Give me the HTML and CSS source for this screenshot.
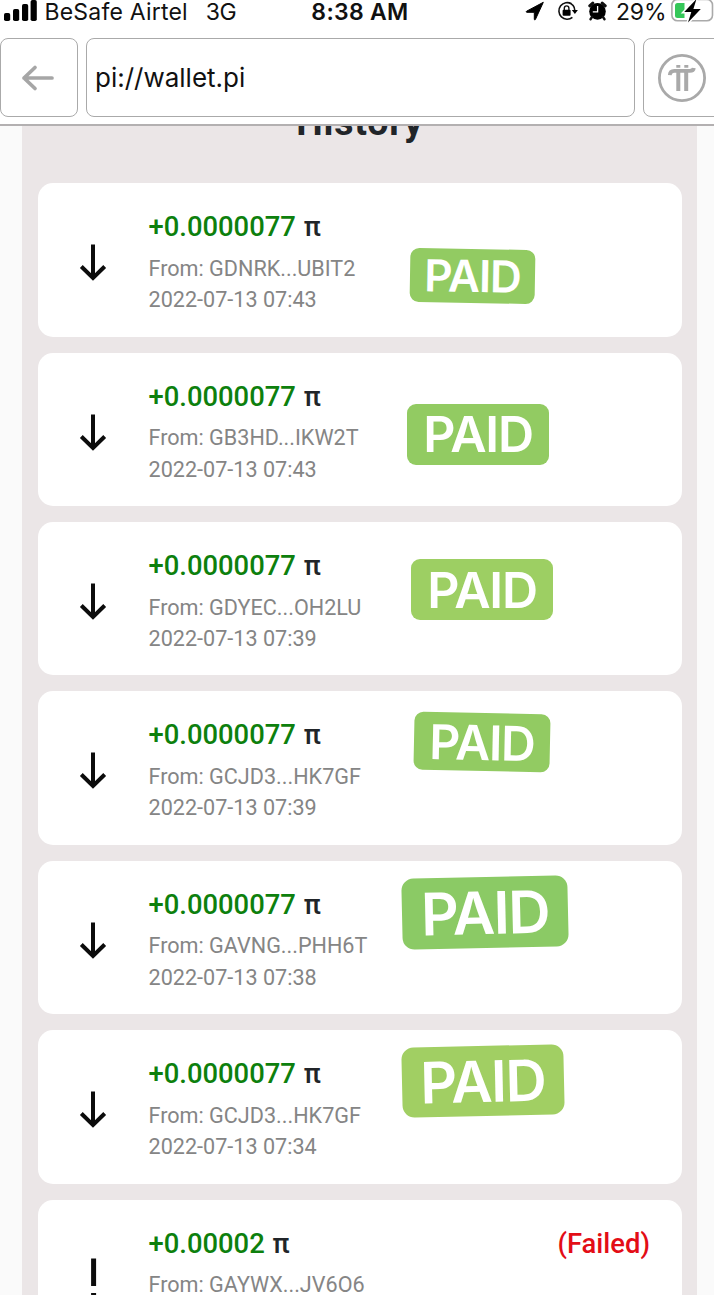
FILE: index.html
```html
<!DOCTYPE html>
<html lang="en">
<head>
    <meta charset="UTF-8" />
    <meta name="viewport" content="width=device-width, initial-scale=1" />
    <title>Pi Wallet - History</title>
    <link rel="stylesheet" href="styles.css">
</head>
<body>

    <!-- Shared icons -->
    <svg class="icon-defs" width="0" height="0">
        <symbol id="arrow-down" viewBox="0 0 28 38">
            <path d="M14 0.5V34M2.3 22.5L14 34L25.7 22.5" fill="none" stroke="#0c0c0c" stroke-width="4" />
        </symbol>
    </svg>

    <header class="top">
        <div class="status-bar">
            <div class="status-left">
                <svg class="signal" width="33" height="22" viewBox="0 0 33 22">
                    <rect x="0" y="13" width="6.2" height="8" rx="1.8" />
                    <rect x="9" y="9" width="6.2" height="12" rx="1.8" />
                    <rect x="18" y="4" width="6.2" height="17" rx="1.8" />
                    <rect x="26.6" y="0" width="6.2" height="21" rx="1.8" />
                </svg>
                <span class="carrier">BeSafe Airtel</span>
                <span class="network">3G</span>
            </div>
            <div class="time">8:38 AM</div>
            <div class="status-right">
                <svg class="location" width="18" height="20" viewBox="0 0 18 20">
                    <path d="M17.3 1.3L0.6 10.2C0 10.6 0.2 11.3 0.9 11.3H8.3V18.2C8.3 19 9.1 19.2 9.4 18.5Z" stroke="#000" />
                </svg>
                <svg class="lock" width="21" height="20" viewBox="0 0 21 20">
                    <path d="M14.5 2.8A8.3 8.3 0 1 0 15.4 16.4M11.5 1.7A8.3 8.3 0 0 1 17.8 9.5" fill="none" stroke="#111" stroke-width="1.6" />
                    <path d="M14.8 9H20.9L17.9 12.9Z" />
                    <rect x="5.6" y="8.7" width="8" height="6.1" rx="1" />
                    <path d="M7.3 9V7.2A2.3 2.3 0 0 1 11.9 7.2V9" fill="none" stroke="#111" stroke-width="1.4" />
                </svg>
                <svg class="alarm" width="19" height="20" viewBox="0 0 19 20">
                    <circle cx="9.5" cy="10.4" r="8.3" />
                    <path d="M1.7 4.8L4.8 2M17.3 4.8L14.2 2" stroke="#111" stroke-width="3" stroke-linecap="round" />
                    <path d="M4 16L2.5 18.2M15 16L16.5 18.2" stroke="#111" stroke-width="2.4" stroke-linecap="round" />
                    <path d="M9.6 5V10.8H4.8" fill="none" stroke="#fff" stroke-width="1.3" />
                </svg>
                <span class="percent">29%</span>
                <svg class="battery" width="43" height="24" viewBox="0 0 43 24">
                    <rect x="0.9" y="-0.5" width="40.6" height="21.3" rx="5.5" fill="#fff" stroke="#aaa" stroke-width="1.6" />
                    <path d="M6.5 3H13.5V18H6.5Q4 18 4 15.5V5.5Q4 3 6.5 3Z" fill="#35c759" />
                    <path d="M25.5 -1L13.2 12H20.3L17 22.5L29.8 9H22.4Z" fill="#000" stroke="#fff" stroke-width="3" paint-order="stroke" />
                </svg>
            </div>
        </div>

        <nav class="browser-bar">
            <div class="back-btn">
                <svg width="34" height="26" viewBox="0 0 34 26">
                    <path d="M31 13H3M14 2.5L3 13L14 23.5" fill="none" stroke="#a6a6a6" stroke-width="3.7" stroke-linecap="round" stroke-linejoin="round" />
                </svg>
            </div>
            <div class="address">pi://wallet.pi</div>
            <div class="pi-btn">
                <svg width="50" height="50" viewBox="0 0 50 50">
                    <circle cx="25" cy="25" r="22.6" fill="none" stroke="#a9a9a9" stroke-width="2.8" />
                    <path d="M12.8 22.2Q13 17.8 17.3 17.8H32.8Q36.5 17.8 36.8 15" fill="none" stroke="#a9a9a9" stroke-width="3.8" />
                    <path d="M21.3 18V38M29.2 18V38" stroke="#a9a9a9" stroke-width="4" />
                    <path d="M19.3 13.4H23.3M27.3 13.4H31.3" stroke="#a9a9a9" stroke-width="2.8" />
                </svg>
            </div>
        </nav>
    </header>

    <main class="wallet">
        <h1 class="page-title">History</h1>

        <div class="history">
            <div class="card">
                <svg class="arrow"><use href="#arrow-down" /></svg>
                <div class="details">
                    <div class="amount"><span class="plus">+0.0000077</span> π</div>
                    <p>From: GDNRK...UBIT2</p>
                    <p>2022-07-13 07:43</p>
                </div>
                <span class="paid paid-1">PAID</span>
            </div>

            <div class="card">
                <svg class="arrow"><use href="#arrow-down" /></svg>
                <div class="details">
                    <div class="amount"><span class="plus">+0.0000077</span> π</div>
                    <p>From: GB3HD...IKW2T</p>
                    <p>2022-07-13 07:43</p>
                </div>
                <span class="paid paid-2">PAID</span>
            </div>

            <div class="card">
                <svg class="arrow"><use href="#arrow-down" /></svg>
                <div class="details">
                    <div class="amount"><span class="plus">+0.0000077</span> π</div>
                    <p>From: GDYEC...OH2LU</p>
                    <p>2022-07-13 07:39</p>
                </div>
                <span class="paid paid-3">PAID</span>
            </div>

            <div class="card">
                <svg class="arrow"><use href="#arrow-down" /></svg>
                <div class="details">
                    <div class="amount"><span class="plus">+0.0000077</span> π</div>
                    <p>From: GCJD3...HK7GF</p>
                    <p>2022-07-13 07:39</p>
                </div>
                <span class="paid paid-4">PAID</span>
            </div>

            <div class="card">
                <svg class="arrow"><use href="#arrow-down" /></svg>
                <div class="details">
                    <div class="amount"><span class="plus">+0.0000077</span> π</div>
                    <p>From: GAVNG...PHH6T</p>
                    <p>2022-07-13 07:38</p>
                </div>
                <span class="paid paid-5">PAID</span>
            </div>

            <div class="card">
                <svg class="arrow"><use href="#arrow-down" /></svg>
                <div class="details">
                    <div class="amount"><span class="plus">+0.0000077</span> π</div>
                    <p>From: GCJD3...HK7GF</p>
                    <p>2022-07-13 07:34</p>
                </div>
                <span class="paid paid-6">PAID</span>
            </div>

            <div class="card">
                <svg class="arrow" viewBox="0 0 28 38">
                    <path d="M14.6 -2.5V25M14.6 32V39" stroke="#0c0c0c" stroke-width="5" />
                </svg>
                <div class="details">
                    <div class="amount"><span class="plus">+0.00002</span> π</div>
                    <p>From: GAYWX...JV6O6</p>
                </div>
                <span class="failed">(Failed)</span>
            </div>
        </div>
    </main>

</body>
</html>
```

FILE: styles.css
```css
* {
    margin: 0;
    padding: 0;
    box-sizing: border-box;
}
body {
    height: 1295px;
    overflow: hidden;
    display: flex;
    flex-direction: column;
    background: #fafafa;
    color: #212529;
    font-family: Roboto, sans-serif;
}
svg {
    display: block;
    flex-shrink: 0;
    overflow: visible;
}
.icon-defs {
    display: none;
}

/* Status bar */
.top {
    flex: none;
    height: 126px;
    background: #fff;
    border-bottom: 2px solid #b3b0b1;
    font-family: Inter, sans-serif;
    color: #111;
}
.status-bar {
    height: 38px;
    display: grid;
    grid-template-columns: 260px 200px 1fr;
    font-size: 23px;
    line-height: 24px;
    white-space: nowrap;
}
.status-left {
    display: flex;
    padding-left: 3.5px;
}
.carrier {
    margin-left: 8px;
    letter-spacing: 0.2px;
}
.network {
    margin-left: 18px;
    letter-spacing: -0.4px;
}
.time {
    text-align: center;
    font-weight: 600;
    letter-spacing: 0.3px;
}
.status-right {
    display: flex;
    padding-left: 66px;
}
.location,
.lock,
.alarm {
    margin-top: 1px;
}
.lock {
    margin-left: 12.5px;
}
.alarm {
    margin-left: 10px;
}
.percent {
    margin-left: 9.5px;
    letter-spacing: -0.2px;
}
.battery {
    margin-left: 5px;
}

/* Browser bar */
.browser-bar {
    display: flex;
    gap: 8px;
    width: 740px;
    height: 79px;
}
.back-btn,
.address,
.pi-btn {
    flex: none;
    display: flex;
    align-items: center;
    border: 1.5px solid #aaa;
    border-radius: 8px;
}
.back-btn {
    width: 78px;
    padding-left: 20px;
}
.address {
    width: 549px;
    padding-left: 8px;
    font-size: 26px;
}
.pi-btn {
    width: 90px;
    padding-left: 13px;
}

/* History panel, scrolled under the header */
.wallet {
    flex: 1;
    min-height: 0;
    overflow: hidden;
    margin: 0 17px 0 22px;
    padding: 0 15px 0 16px;
    background: #ebe6e7;
}
.page-title {
    margin-top: -28px;
    height: 85.3px;
    font-size: 37.5px;
    line-height: 48px;
    font-weight: 700;
    letter-spacing: 0.8px;
    text-align: center;
}
.history {
    display: flex;
    flex-direction: column;
    gap: 16px;
}
.card {
    position: relative;
    flex: none;
    display: flex;
    height: 153.4px;
    padding: 26px 32px 0 41px;
    background: #fff;
    border-radius: 15px;
}
.arrow {
    width: 28px;
    height: 38px;
    margin-top: 35px;
}
.details {
    flex: 1;
    margin-left: 41.5px;
    font-size: 21.6px;
    line-height: 31.3px;
    color: #858585;
}
.amount {
    margin-bottom: 7.6px;
    font-size: 27.4px;
    line-height: 36px;
    font-weight: 500;
    color: #212529;
}
.plus {
    margin-right: 1px;
    color: #0d800d;
}
.failed {
    font-size: 27.4px;
    line-height: 36px;
    font-weight: 500;
    color: #e30d16;
}

/* Paid stickers, laid over the cards by hand */
.paid {
    position: absolute;
    display: flex;
    align-items: center;
    justify-content: center;
    border-radius: 9px;
    background: #92cb62;
    color: #fff;
    font-family: Inter, sans-serif;
    font-weight: 600;
    letter-spacing: -0.025em;
}
.paid-1 {
    left: 371.5px;
    top: 65.5px;
    width: 125px;
    height: 54px;
    font-size: 44px;
    transform: rotate(1deg);
}
.paid-2 {
    left: 369px;
    top: 51px;
    width: 142px;
    height: 61px;
    font-size: 50px;
}
.paid-3 {
    left: 373px;
    top: 37px;
    width: 142px;
    height: 61px;
    padding-top: 1px;
    font-size: 50px;
    background: #9dcf63;
}
.paid-4 {
    left: 376px;
    top: 21.5px;
    width: 136px;
    height: 58px;
    font-size: 48px;
    transform: rotate(1.2deg);
}
.paid-5 {
    left: 364px;
    top: 16.5px;
    width: 166px;
    height: 71px;
    font-size: 58.5px;
    border-radius: 12px;
    background: #8bca65;
    transform: rotate(-1.3deg);
}
.paid-6 {
    left: 364px;
    top: 15.5px;
    width: 161.5px;
    height: 70px;
    font-size: 57px;
    border-radius: 12px;
    background: #a1cf63;
    transform: rotate(-1.3deg);
}
```
